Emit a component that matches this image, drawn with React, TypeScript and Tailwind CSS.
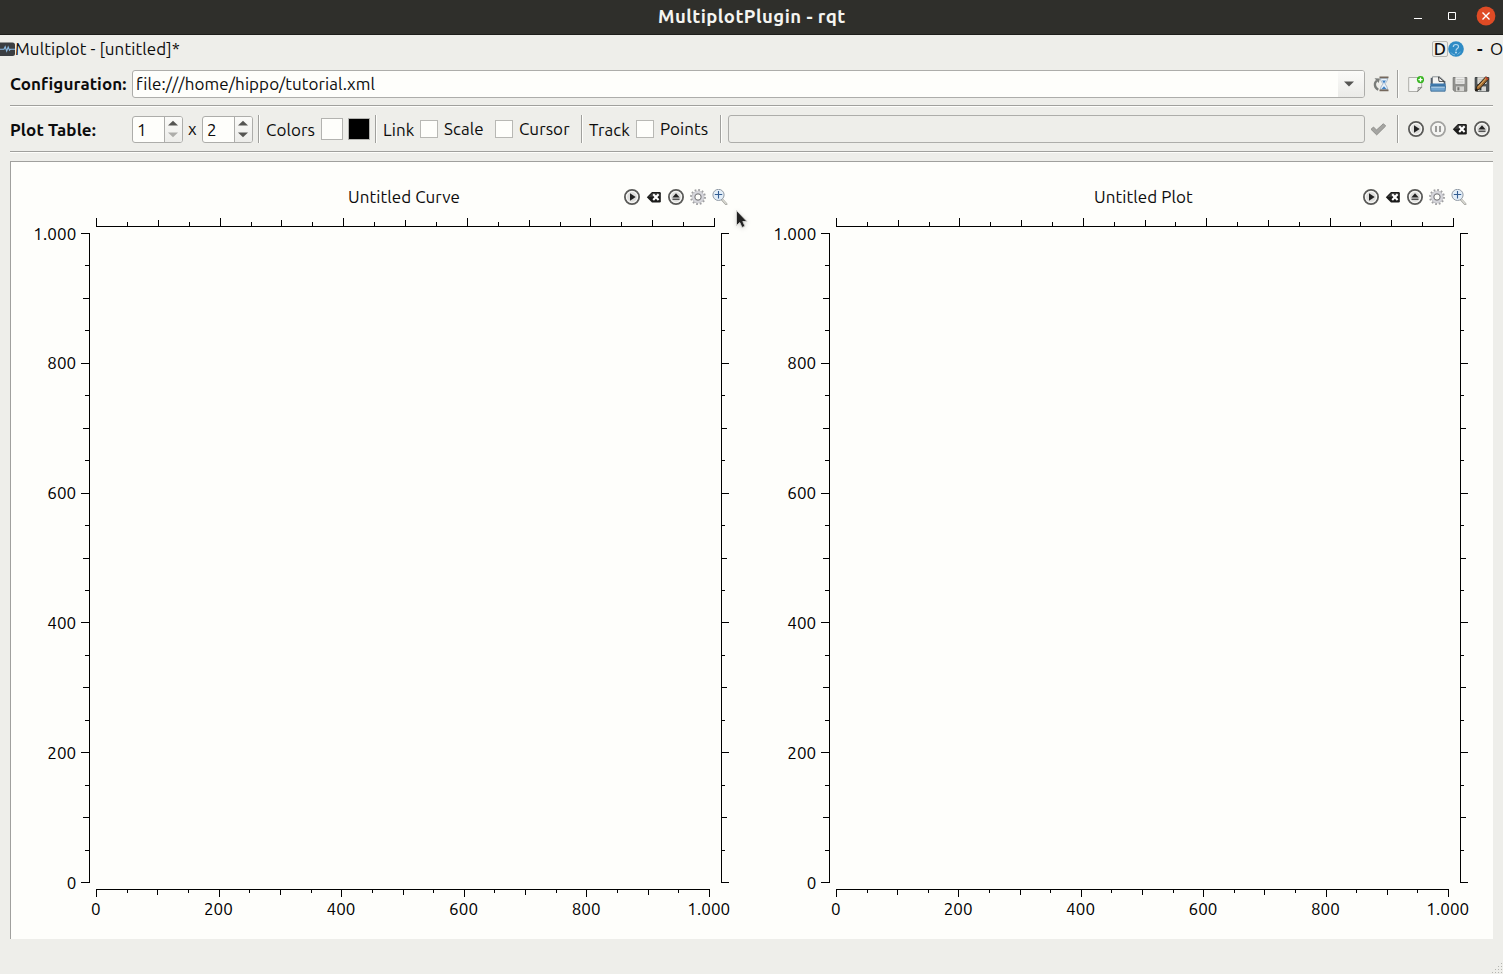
import React from "react";

type Kids = { children?: React.ReactNode };

const Svg = ({ children }: Kids) => (
  <svg width="16" height="16" viewBox="0 0 16 16" className="block shrink-0">
    {children}
  </svg>
);

const Ring = ({ light, children }: Kids & { light?: boolean }) => (
  <Svg>
    <circle cx="8" cy="8" r="7.1" fill="#f4f4f2" stroke={light ? "#a2a2a0" : "#5a5a58"} strokeWidth="1.8" />
    <circle cx="8" cy="8" r="5.4" fill={light ? "#f2f2f0" : "#dededc"} stroke="#fafaf8" strokeWidth="0.8" />
    {children}
  </Svg>
);

const PlayIcon = () => (
  <Ring>
    <path d="M6 4.300 11.700 8 6 11.700Z" fill="#222" />
  </Ring>
);
const PauseIcon = () => (
  <Ring light>
    <path d="M5 5h2v6H5zM9 5h2v6H9z" fill="#9b9b99" />
  </Ring>
);
const EjectIcon = () => (
  <Ring>
    <path d="M8 4.200 11.700 8.600H4.300Z" fill="#222" />
    <path d="M4.500 9.600h7v1.300h-7z" fill="#444" />
  </Ring>
);
const ClearIcon = () => (
  <Svg>
    <path d="M.8 8.200 6 3h7.600q1.200 0 1.200 1.200v8q0 1.200-1.200 1.200H6Z" fill="#1b1b1a" />
    <path d="M2.200 8 6.400 4H13.500v3.500Z" fill="#555" opacity=".55" />
    <path d="m7.200 5.300 5.400 5.600m0-5.600-5.400 5.600" stroke="#fff" strokeWidth="2.100" />
  </Svg>
);
const GearIcon = () => (
  <Svg>
    <circle cx="8" cy="8" r="6.800" fill="none" stroke="#a0a0a3" strokeWidth="2.300" strokeDasharray="1.750 1.810" />
    <circle cx="8" cy="8" r="4.700" fill="none" stroke="#b0b0b5" strokeWidth="3.200" />
    <circle cx="8" cy="8" r="4.800" fill="none" stroke="#d6d6db" strokeWidth="2.300" />
    <circle cx="8" cy="8" r="3.100" fill="#fefefb" stroke="#7d7d80" strokeWidth="1" />
  </Svg>
);
const ZoomIcon = () => (
  <Svg>
    <path d="m9.800 10.200 4.400 4.800" stroke="#9c9c98" strokeWidth="2.400" strokeLinecap="round" />
    <path d="m10.400 10.600 3.800 4.200" stroke="#e2e2da" strokeWidth="1.100" strokeLinecap="round" />
    <circle cx="6.500" cy="5.900" r="5.600" fill="#e3eef8" stroke="#929ba5" strokeWidth="1" />
    <path d="M6.500 2v7.500M2.800 5.500h7.400" stroke="#345e93" strokeWidth="1.100" />
  </Svg>
);
const CheckIcon = () => (
  <Svg>
    <path d="M0 8.300 2.500 6l3 3 6.900-6.300L14.700 5l-9 8.900Z" fill="#a5a5a2" stroke="#8c8c89" strokeWidth=".9" />
  </Svg>
);
const HistoryIcon = () => (
  <Svg>
    <path d="M5.300 13.700C1.300 11.600.8 7 3.900 4.600" fill="none" stroke="#7a7d7a" strokeWidth="2.300" />
    <path d="M1.500 2.200 7 2.400 5.700 7Z" fill="#7a7d7a" />
    <path d="M7.500 2.200h7c0 3-1.800 4.400-2.600 5.700.8 1.300 2.600 2.600 2.600 5.700h-7c0-3.100 1.800-4.400 2.600-5.700C9.300 6.600 7.500 5.200 7.500 2.200Z" fill="#eaf2fa" stroke="#8fa6be" strokeWidth=".8" />
    <path d="M9 4.600h4L11 7.500ZM8.500 13l2.500-2.800L13.500 13Z" fill="#3f82c4" />
    <path d="M6.500.6h9v1.600h-9zM6.500 13.600h9v1.600h-9z" fill="#75685c" />
  </Svg>
);
const NewIcon = () => (
  <Svg>
    <path d="M.7 1.500h13v10l-4 4h-9Z" fill="#f5f5f3" stroke="#a6a6a2" strokeWidth=".9" />
    <path d="M13.700 11.200c-1.500.5-2.700.5-3.600.3.200 1.500 0 2.800-.5 4Z" fill="#d2d2ce" stroke="#777773" strokeWidth=".8" />
    <circle cx="12.500" cy="3.600" r="3.600" fill="#36b51f" />
    <path d="M12.500 1.500v4.200M10.400 3.600h4.200" stroke="#fff" strokeWidth="1.400" />
  </Svg>
);
const OpenIcon = () => (
  <Svg>
    <path d="M.7 1.800h3.400v7H.7Z" fill="#535f6c" />
    <path d="M11 5h4.300v5H11Z" fill="#46525e" />
    <path d="M2.500.8H10l4 4v6H2.500Z" fill="#f4f4f2" stroke="#727a80" strokeWidth=".8" />
    <path d="m8.500 1 .5 4.400h5Z" fill="#fff" stroke="#333" strokeWidth=".9" />
    <path d="M.4 7.500h15.200v3.200H.4Z" fill="#3e79ae" />
    <path d="M.4 10.200h15.200l-.5 5H.9Z" fill="#72a5d0" stroke="#346591" strokeWidth=".8" />
    <path d="M1.300 11.200h13.400" stroke="#b5d2e9" />
  </Svg>
);
const SaveShape = ({ dark }: { dark?: boolean }) => (
  <>
    <path d="M1.200 1.500h13.600v13.700H2.500L1.200 14Z" fill={dark ? "#4f5558" : "#92928f"} stroke={dark ? "#3b3f40" : "#7c7c79"} />
    <path d="M3.400 1.200h9.200v6.700H3.400Z" fill={dark ? "#deded9" : "#ededeb"} />
    <path d="M4.500 3.700h7M4.500 6h7" stroke="#b7b7b2" strokeWidth=".8" />
    <path d="M4 10.400h8v4.800H4Z" fill="#d5d5d2" />
    <path d="M5.400 11.200h2v3.200h-2Z" fill={dark ? "#273538" : "#757572"} />
  </>
);
const SaveIcon = () => (
  <Svg>
    <SaveShape />
  </Svg>
);
const SaveAsIcon = () => (
  <Svg>
    <SaveShape dark />
    <path d="m1.300 15 1.500-4.600L11.800.7l2.700 2.300-8.900 10Z" fill="#a0692f" stroke="#332a1c" strokeWidth="1" />
    <path d="m4 11.500 8.600-9.800" stroke="#dcae68" strokeWidth="1" />
    <path d="m11.500 1.300 2.500 2.100" stroke="#c33e29" strokeWidth="1.500" />
    <path d="m1.300 15 .9-2.700 1.800 1.500Z" fill="#171717" />
  </Svg>
);
const PluginIcon = () => (
  <svg width="15" height="16" viewBox="0 0 15 16" className="block shrink-0">
    <path d="M0 1.500h12.500Q15 1.500 15 4v8.500Q15 15 12.500 15H0Z" fill="#3b3e42" />
    <path d="M0 8.300h4l1.200-2.500 1.500 4.400L8.200 6l1.300 3.200 1-1H15" fill="none" stroke="#8bbbe5" strokeWidth="1.100" />
  </svg>
);
const HelpIcon = () => (
  <Svg>
    <circle cx="8" cy="8" r="7.800" fill="#2e8bc5" />
    <path d="M5.300 6C5.300 2.600 10.600 2.800 10.500 5.800 10.400 7.700 8 7.500 8 9.800" fill="none" stroke="#b5d9f0" strokeWidth="1.200" />
    <circle cx="8" cy="11.500" r=".9" fill="#c9e4f6" />
    <path d="M3 11.500c1.500 2 2.500 2.300 4 2.300M9.500 13.500l3-2.500" fill="none" stroke="#75b7e0" />
  </Svg>
);

const VSep = ({ className }: { className: string }) => (
  <div className={"h-7 w-[2px] shrink-0 border-l border-[#a0a09d] bg-[#fefefb] " + className} />
);
const HSep = () => <div className="mx-[10px] h-[2px] shrink-0 border-t border-[#a0a09d] bg-[#fefefb]" />;
const Label = ({ className, children }: Kids & { className: string }) => (
  <span className={"block shrink-0 whitespace-nowrap leading-7 " + className}>{children}</span>
);
const Check = () => <div className="size-[18px] shrink-0 border border-[#b8b8b4] bg-[#fefefb]" />;

const Spin = ({ value, min }: { value: string; min?: boolean }) => (
  <div className="flex h-[27px] w-[51px] shrink-0 overflow-hidden rounded-[3px] border border-[#adadaa] bg-[#fefefb]">
    <span className="w-[31px] pl-[4px] leading-[26px]">{value}</span>
    <div className="flex flex-1 items-center border-l border-[#adadaa] bg-gradient-to-b from-[#fafaf8] to-[#ededea] pl-[3px]">
      <svg width="10" height="18" viewBox="0 0 10 18">
        <path d="M0 5.500 5 .8l5 4.700Z" fill="#555552" />
        <path d="M0 12.500 5 17.200l5-4.700Z" fill={min ? "#adadaa" : "#555552"} />
      </svg>
    </div>
  </div>
);

const ticks = Array.from({ length: 21 }, (_, i) => i);
const size = (i: number) => (i % 4 === 0 ? 8 : i % 2 === 0 ? 6 : 4);
const names = ["0", "200", "400", "600", "800", "1.000"];

const Plot = ({ title, second }: { title: string; second?: boolean }) => {
  const top = second ? 617 : 618;
  const bottom = second ? 612 : 613;
  const right = second ? 710 : 711;
  const x0 = 86;
  return (
    <section className={second ? "w-[742px] shrink-0" : "w-[740px] shrink-0"}>
      <header className="flex h-[49px] items-center pt-[23px]">
        <h2 className={second ? "w-[613px] pl-[344px] whitespace-nowrap" : "w-[614px] pl-[338px] whitespace-nowrap"}>
          {title}
        </h2>
        <div className="flex gap-[6px]">
          <PlayIcon />
          <ClearIcon />
          <EjectIcon />
          <GearIcon />
          <ZoomIcon />
        </div>
      </header>
      <svg width="740" height="728" viewBox="0 210 740 728" className="block" fontSize="17" shapeRendering="crispEdges">
        <path
          stroke="#000"
          fill="none"
          d={
            `M${x0} 226.500H${x0 + top + 1}M${x0} 889.500H${x0 + bottom + 1}M79.500 233V883M${right + 0.5} 233V883` +
            ticks
              .map((i) => {
                const tx = x0 + Math.round((i * top) / 20) + 0.5;
                const bx = x0 + Math.round((i * bottom) / 20) + 0.5;
                const y = 882.5 - Math.round(i * 32.45 - 0.02);
                const s = size(i);
                return `M${tx} 226v-${s}M${bx} 890v${s - 1}M79 ${y}h-${s}M${right + 1} ${y}h${s - 1}`;
              })
              .join("")
          }
        />
        {names.map((n, i) => (
          <React.Fragment key={n}>
            <text x={x0 + (i * bottom) / 5 - 0.2} y="915" textAnchor="middle">
              {n}
            </text>
            <text x="66.300" y={Math.floor(889 - i * 129.8)} textAnchor="end">
              {n}
            </text>
          </React.Fragment>
        ))}
      </svg>
    </section>
  );
};

export default function App() {
  return (
    <div className="relative flex h-[974px] w-[1503px] flex-col overflow-hidden bg-[#eeeeea] font-['Ubuntu','Noto_Sans',sans-serif] text-[17px] leading-6 tracking-[0.08px] text-[#0c0c0c]">
      <div className="flex h-[35px] shrink-0 items-center border-b border-[#1d1d1a] bg-[#2f2f2b]">
        <h1 className="w-[1410px] pb-[2px] pl-[658px] text-[18.5px] font-bold tracking-[0.45px] whitespace-nowrap text-[#f4f4f0]">
          MultiplotPlugin - rqt
        </h1>
        <svg width="93" height="34" viewBox="1410 0 93 34">
          <path d="M1414 18.500h8" stroke="#fff" />
          <path d="M1448.500 12.500h7v7h-7z" fill="none" stroke="#fff" />
          <circle cx="1486" cy="16" r="9.400" fill="#df4b25" />
          <path d="m1482.500 12.500 7 7m0-7-7 7" stroke="#fff" strokeWidth="1.400" />
        </svg>
      </div>

      <div className="flex h-[28px] shrink-0 items-center">
        <PluginIcon />
        <Label className="w-[1417px]">Multiplot - [untitled]*</Label>
        <div className="flex h-4 w-4 shrink-0 items-center justify-center rounded-[2px] border border-[#b7b7b3] leading-4 font-medium">D</div>
        <HelpIcon />
        <Label className="ml-[13px] w-[13px] font-bold">-</Label>
        <Label className="w-4">O</Label>
      </div>

      <div className="mt-[7px] flex h-[28px] shrink-0 items-center pl-[10px]">
        <Label className="w-[122px] font-bold">Configuration:</Label>
        <div className="flex h-[28px] w-[1233px] shrink-0 overflow-hidden rounded-[3px] border border-[#adadaa] bg-[#fefefb]">
          <span className="flex-1 pl-[3px] leading-[26px]">file:///home/hippo/tutorial.xml</span>
          <div className="flex w-[26px] items-center bg-gradient-to-b from-[#fbfbf9] to-[#ebebe8] pl-[6px]">
            <svg width="10" height="6" viewBox="0 0 10 6">
              <path d="M0 .5h10L5 5.500Z" fill="#555552" />
            </svg>
          </div>
        </div>
        <div className="ml-[8px]">
          <HistoryIcon />
        </div>
        <VSep className="ml-[8px]" />
        <div className="ml-[9px] flex gap-[6px]">
          <NewIcon />
          <OpenIcon />
          <SaveIcon />
          <SaveAsIcon />
        </div>
      </div>
      <div className="h-[7px] shrink-0" />
      <HSep />

      <div className="mt-[8px] flex h-[28px] shrink-0 items-center pl-[10px]">
        <Label className="w-[122px] pt-[2px] font-bold">Plot Table:</Label>
        <Spin value="1" min />
        <Label className="w-[19px] pl-[5px]">x</Label>
        <Spin value="2" />
        <VSep className="ml-[5px]" />
        <Label className="ml-[6px] w-[55px] pt-px">Colors</Label>
        <div className="size-[22px] shrink-0 border border-[#b3b3b0] bg-[#fefefb]" />
        <div className="ml-[5px] size-[22px] shrink-0 border border-[#b3b3b0] bg-black" />
        <VSep className="ml-[5px]" />
        <Label className="ml-[6px] w-[37px] pt-px">Link</Label>
        <Check />
        <Label className="ml-[6px] w-[51px]">Scale</Label>
        <Check />
        <Label className="ml-[6px] w-[62px]">Cursor</Label>
        <VSep className="" />
        <Label className="ml-[6px] w-[47px] pt-px">Track</Label>
        <Check />
        <Label className="ml-[6px] w-[60px]">Points</Label>
        <VSep className="" />
        <div className="ml-[6px] h-[28px] w-[637px] shrink-0 rounded-[3px] border border-[#adadaa]" />
        <div className="ml-[6px]">
          <CheckIcon />
        </div>
        <VSep className="ml-[10px]" />
        <div className="ml-[9px] flex gap-[6px]">
          <PlayIcon />
          <PauseIcon />
          <ClearIcon />
          <EjectIcon />
        </div>
      </div>
      <div className="h-[8px] shrink-0" />
      <HSep />

      <main className="mt-[8px] ml-[10px] flex h-[778px] w-[1483px] shrink-0 overflow-hidden bg-[#fefefb] shadow-[inset_1px_1px_0_#a0a09d]">
        <Plot title="Untitled Curve" />
        <Plot title="Untitled Plot" second />
      </main>

      <footer className="flex flex-1 items-end justify-end">
        <svg width="12" height="12" viewBox="0 0 12 12" fill="#b5b5b1">
          <path d="M10 1h1v1h-1zM7 4h1v1H7zM10 4h1v1h-1zM4 7h1v1H4zM7 7h1v1H7zM10 7h1v1h-1zM1 10h1v1H1zM4 10h1v1H4zM7 10h1v1H7zM10 10h1v1h-1z" />
        </svg>
      </footer>

      <svg width="14" height="22" viewBox="0 0 14 22" className="absolute top-[209px] left-[735px] drop-shadow-sm">
        <path d="M1.500 1.500v15l3.300-3 2.200 5 3-1.300-2.200-4.700h4.200Z" fill="#222" stroke="#d5d5d2" strokeWidth=".9" />
      </svg>
    </div>
  );
}
